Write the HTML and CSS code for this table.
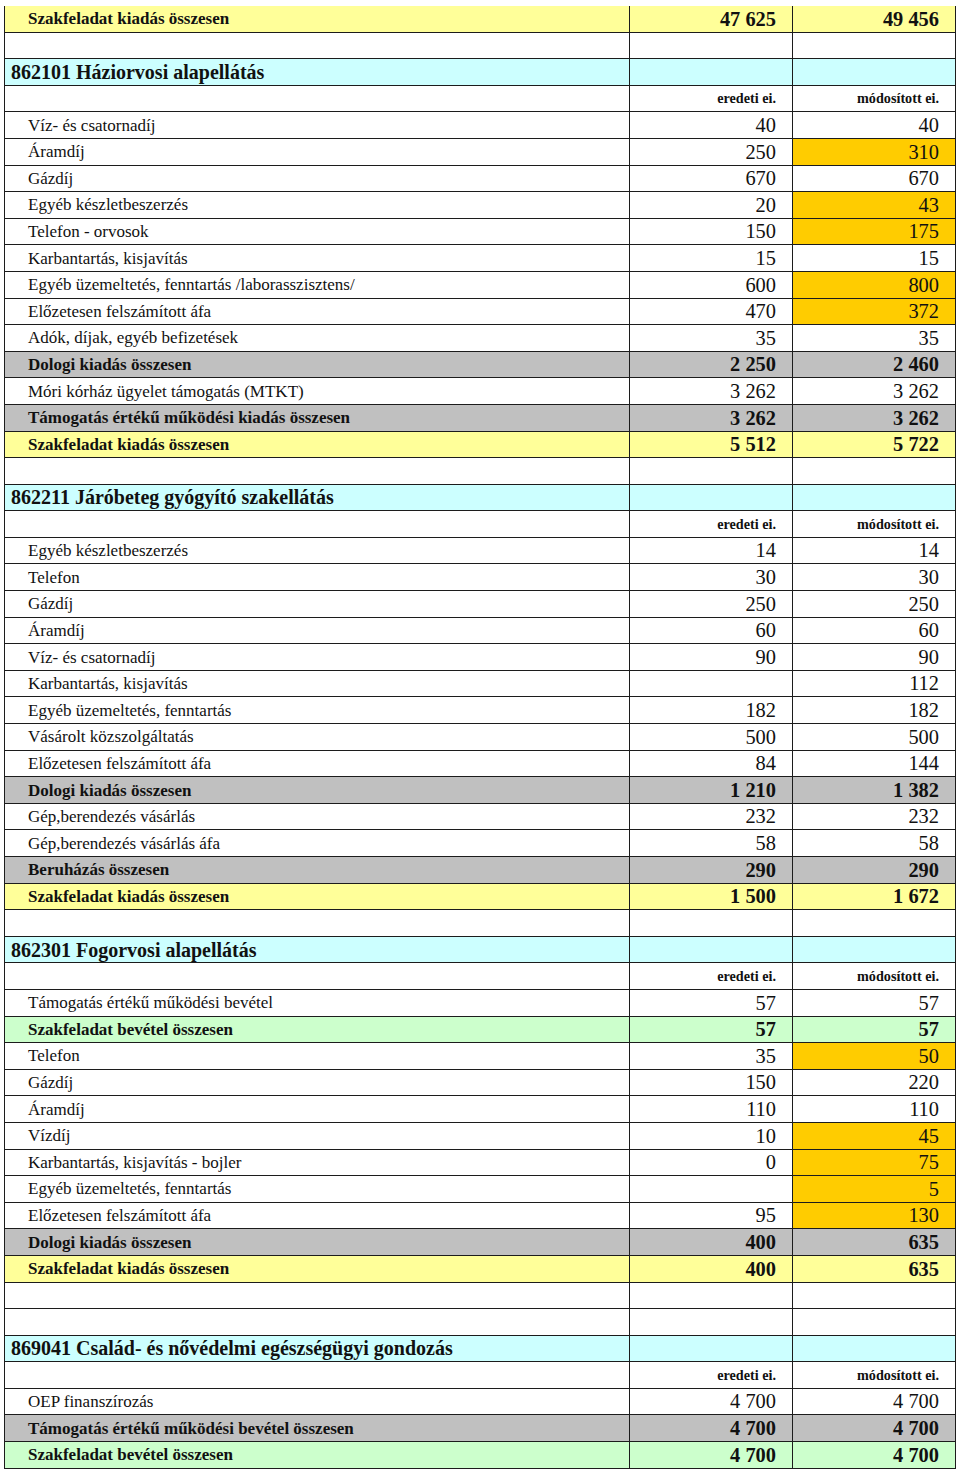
FILE: index.html
```html
<!DOCTYPE html>
<html lang="hu">
<head>
<meta charset="utf-8">
<title>Szakfeladatok</title>
<link rel="stylesheet" href="styles.css">
</head>
<body>
<table class="sheet">
<colgroup><col class="c-label"><col class="c-num"><col class="c-num"></colgroup>
<tbody>
<tr class="total first"><td class="lbl">Szakfeladat kiadás összesen</td><td class="num">47 625</td><td class="num">49 456</td></tr>
<tr class="blank"><td></td><td></td><td></td></tr>
<tr class="section"><td class="title">862101 Háziorvosi alapellátás</td><td></td><td></td></tr>
<tr class="head"><td></td><td class="hnum">eredeti ei.</td><td class="hnum">módosított ei.</td></tr>
<tr><td class="lbl">Víz- és csatornadíj</td><td class="num">40</td><td class="num">40</td></tr>
<tr><td class="lbl">Áramdíj</td><td class="num">250</td><td class="num chg">310</td></tr>
<tr><td class="lbl">Gázdíj</td><td class="num">670</td><td class="num">670</td></tr>
<tr><td class="lbl">Egyéb készletbeszerzés</td><td class="num">20</td><td class="num chg">43</td></tr>
<tr><td class="lbl">Telefon - orvosok</td><td class="num">150</td><td class="num chg">175</td></tr>
<tr><td class="lbl">Karbantartás, kisjavítás</td><td class="num">15</td><td class="num">15</td></tr>
<tr><td class="lbl">Egyéb üzemeltetés, fenntartás /laborasszisztens/</td><td class="num">600</td><td class="num chg">800</td></tr>
<tr><td class="lbl">Előzetesen felszámított áfa</td><td class="num">470</td><td class="num chg">372</td></tr>
<tr><td class="lbl">Adók, díjak, egyéb befizetések</td><td class="num">35</td><td class="num">35</td></tr>
<tr class="sub"><td class="lbl">Dologi kiadás összesen</td><td class="num">2 250</td><td class="num">2 460</td></tr>
<tr><td class="lbl">Móri kórház ügyelet támogatás (MTKT)</td><td class="num">3 262</td><td class="num">3 262</td></tr>
<tr class="sub"><td class="lbl">Támogatás értékű működési kiadás összesen</td><td class="num">3 262</td><td class="num">3 262</td></tr>
<tr class="total"><td class="lbl">Szakfeladat kiadás összesen</td><td class="num">5 512</td><td class="num">5 722</td></tr>
<tr class="blank"><td></td><td></td><td></td></tr>
<tr class="section"><td class="title">862211 Járóbeteg gyógyító szakellátás</td><td></td><td></td></tr>
<tr class="head"><td></td><td class="hnum">eredeti ei.</td><td class="hnum">módosított ei.</td></tr>
<tr><td class="lbl">Egyéb készletbeszerzés</td><td class="num">14</td><td class="num">14</td></tr>
<tr><td class="lbl">Telefon</td><td class="num">30</td><td class="num">30</td></tr>
<tr><td class="lbl">Gázdíj</td><td class="num">250</td><td class="num">250</td></tr>
<tr><td class="lbl">Áramdíj</td><td class="num">60</td><td class="num">60</td></tr>
<tr><td class="lbl">Víz- és csatornadíj</td><td class="num">90</td><td class="num">90</td></tr>
<tr><td class="lbl">Karbantartás, kisjavítás</td><td class="num"></td><td class="num">112</td></tr>
<tr><td class="lbl">Egyéb üzemeltetés, fenntartás</td><td class="num">182</td><td class="num">182</td></tr>
<tr><td class="lbl">Vásárolt közszolgáltatás</td><td class="num">500</td><td class="num">500</td></tr>
<tr><td class="lbl">Előzetesen felszámított áfa</td><td class="num">84</td><td class="num">144</td></tr>
<tr class="sub"><td class="lbl">Dologi kiadás összesen</td><td class="num">1 210</td><td class="num">1 382</td></tr>
<tr><td class="lbl">Gép,berendezés vásárlás</td><td class="num">232</td><td class="num">232</td></tr>
<tr><td class="lbl">Gép,berendezés vásárlás áfa</td><td class="num">58</td><td class="num">58</td></tr>
<tr class="sub"><td class="lbl">Beruházás összesen</td><td class="num">290</td><td class="num">290</td></tr>
<tr class="total"><td class="lbl">Szakfeladat kiadás összesen</td><td class="num">1 500</td><td class="num">1 672</td></tr>
<tr class="blank"><td></td><td></td><td></td></tr>
<tr class="section"><td class="title">862301 Fogorvosi alapellátás</td><td></td><td></td></tr>
<tr class="head"><td></td><td class="hnum">eredeti ei.</td><td class="hnum">módosított ei.</td></tr>
<tr><td class="lbl">Támogatás értékű működési bevétel</td><td class="num">57</td><td class="num">57</td></tr>
<tr class="income"><td class="lbl">Szakfeladat bevétel összesen</td><td class="num">57</td><td class="num">57</td></tr>
<tr><td class="lbl">Telefon</td><td class="num">35</td><td class="num chg">50</td></tr>
<tr><td class="lbl">Gázdíj</td><td class="num">150</td><td class="num">220</td></tr>
<tr><td class="lbl">Áramdíj</td><td class="num">110</td><td class="num">110</td></tr>
<tr><td class="lbl">Vízdíj</td><td class="num">10</td><td class="num chg">45</td></tr>
<tr><td class="lbl">Karbantartás, kisjavítás - bojler</td><td class="num">0</td><td class="num chg">75</td></tr>
<tr><td class="lbl">Egyéb üzemeltetés, fenntartás</td><td class="num"></td><td class="num chg">5</td></tr>
<tr><td class="lbl">Előzetesen felszámított áfa</td><td class="num">95</td><td class="num chg">130</td></tr>
<tr class="sub"><td class="lbl">Dologi kiadás összesen</td><td class="num">400</td><td class="num">635</td></tr>
<tr class="total"><td class="lbl">Szakfeladat kiadás összesen</td><td class="num">400</td><td class="num">635</td></tr>
<tr class="blank"><td></td><td></td><td></td></tr>
<tr class="blank"><td></td><td></td><td></td></tr>
<tr class="section"><td class="title">869041 Család- és nővédelmi egészségügyi gondozás</td><td></td><td></td></tr>
<tr class="head"><td></td><td class="hnum">eredeti ei.</td><td class="hnum">módosított ei.</td></tr>
<tr><td class="lbl">OEP finanszírozás</td><td class="num">4 700</td><td class="num">4 700</td></tr>
<tr class="sub"><td class="lbl">Támogatás értékű működési bevétel összesen</td><td class="num">4 700</td><td class="num">4 700</td></tr>
<tr class="income"><td class="lbl">Szakfeladat bevétel összesen</td><td class="num">4 700</td><td class="num">4 700</td></tr>
</tbody>
</table>
</body>
</html>
```

FILE: styles.css
```css
html, body {
  margin: 0;
  padding: 0;
  background: #ffffff;
}

body {
  font-family: "Liberation Serif", "Times New Roman", serif;
  color: #111111;
}

.sheet {
  margin: 6px 0 0 4px;
  width: 952px;
  border-collapse: collapse;
  table-layout: fixed;
}

.c-label { width: 625px; }
.c-num { width: 163px; }

.sheet td {
  height: 25.6px;
  padding: 0;
  border: 1px solid #1c1c1c;
  vertical-align: middle;
  white-space: nowrap;
  line-height: 1;
}

.sheet tr.first td {
  border-top: none;
}

.lbl {
  padding-left: 23px !important;
  font-size: 17px;
}

.title {
  padding-left: 6px !important;
  font-size: 20px;
  font-weight: bold;
}

.num {
  text-align: right;
  padding-right: 16px !important;
  font-size: 20.4px;
}

.hnum {
  text-align: right;
  padding-right: 16px !important;
  font-size: 14.2px;
  font-weight: bold;
}

.total td,
.sub td,
.income td {
  font-weight: bold;
}

.total .lbl,
.sub .lbl,
.income .lbl {
  font-size: 17px;
}

.total td { background: #ffff99; }
.sub td { background: #c0c0c0; }
.income td { background: #ccffcc; }
.section td { background: #ccffff; }

.num.chg { background: #ffcc00; }
```
